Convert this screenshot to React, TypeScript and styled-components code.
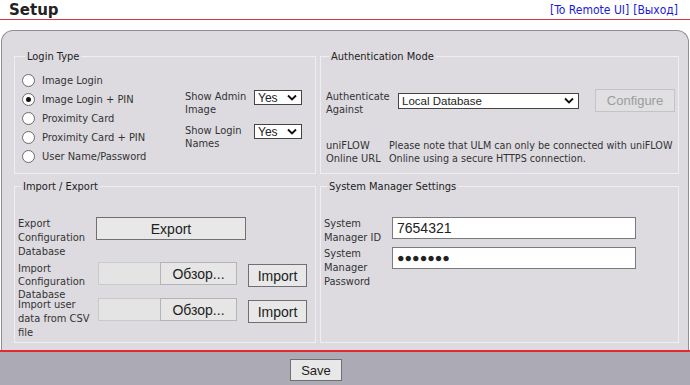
import React from 'react';
import styled, { createGlobalStyle } from 'styled-components';

const labelFont = `'DejaVu Sans Condensed', 'DejaVu Sans', sans-serif`;
const controlFont = `'Liberation Sans', Arial, sans-serif`;

const GlobalStyle = createGlobalStyle`
  html, body {
    margin: 0;
    background: #fff;
  }
  body {
    font-family: ${labelFont};
    color: #333;
  }
`;

const Page = styled.div`
  width: 690px;
  height: 385px;
  display: flex;
  flex-direction: column;
  overflow: hidden;
`;

const Header = styled.header`
  height: 19px;
  border-bottom: 1px solid #d9393b;
  display: flex;
  justify-content: space-between;
  align-items: flex-end;
  padding: 0 12px 0 9px;
`;

const Title = styled.h1`
  margin: 0;
  font: bold 15px/18px 'DejaVu Sans', sans-serif;
  color: #222;
`;

const Links = styled.nav`
  display: flex;
  gap: 4px;
  font-size: 12px;
  line-height: 18px;
`;

const Link = styled.a`
  color: #1a1ad8;
  text-decoration: none;
`;

const Panel = styled.main`
  margin: 10px 1px 0;
  flex: 1;
  background: #dddbe0;
  border: 1px solid #8f8d97;
  border-bottom: none;
  border-radius: 12px 12px 0 0;
  padding: 19px 9px 0 12px;
  display: grid;
  grid-template-columns: 302px 359px;
  grid-template-rows: 124px 163px;
  column-gap: 4px;
  row-gap: 6px;
`;

const Group = styled.fieldset<{ $pad: string }>`
  margin: 0;
  min-width: 0;
  padding: ${({ $pad }) => $pad};
  border: 1px solid #efeef2;
`;

const Legend = styled.legend`
  margin-left: 3px;
  padding: 0 2px;
  font-size: 11px;
  line-height: 13px;
  color: #222;
`;

const Label = styled.div<{ $w: number; $lh?: number; $top?: number }>`
  width: ${({ $w }) => $w}px;
  flex: none;
  margin-top: ${({ $top }) => $top ?? 0}px;
  font-size: 11px;
  line-height: ${({ $lh }) => $lh ?? 13}px;
  color: #333;
`;

/* Login type */
const LoginBody = styled.div`
  display: flex;
`;

const RadioList = styled.div`
  width: 163px;
  display: flex;
  flex-direction: column;
`;

const RadioRow = styled.label`
  height: 19px;
  display: flex;
  align-items: center;
  gap: 7px;
  font-size: 11px;
  color: #333;
`;

const RadioDot = styled.span<{ $checked?: boolean }>`
  width: 13px;
  height: 13px;
  box-sizing: border-box;
  border-radius: 50%;
  border: 1px solid #6a6a6a;
  background: #fff;
  display: grid;
  place-items: center;

  &::after {
    content: '';
    width: 5px;
    height: 5px;
    border-radius: 50%;
    background: ${({ $checked }) => ($checked ? '#111' : 'transparent')};
  }
`;

const Options = styled.div`
  margin-top: 19px;
  display: flex;
  flex-direction: column;
`;

const OptionRow = styled.div`
  height: 34px;
  display: flex;
  align-items: flex-start;
`;

const SelectBox = styled.div<{ $w: number; $h: number; $size: number }>`
  width: ${({ $w }) => $w}px;
  height: ${({ $h }) => $h}px;
  box-sizing: border-box;
  border: 1px solid #444;
  background: #fff;
  display: flex;
  align-items: center;
  justify-content: space-between;
  padding: 0 4px 0 3px;
  font: ${({ $size }) => $size}px ${controlFont};
  color: #222;
`;

const Chevron = () => (
  <svg width="10" height="7" viewBox="0 0 10 7">
    <polyline points="1,1.5 5,5.5 9,1.5" fill="none" stroke="#111" strokeWidth="1.9" />
  </svg>
);

/* Buttons */
const tones = {
  normal: { bg: '#e8e8e8', border: '#707070', color: '#222' },
  soft: { bg: '#e6e6e6', border: '#b4b4b4', color: '#222' },
  disabled: { bg: '#e0dfe2', border: '#c4c4c4', color: '#9c9c9c' },
};

const Button = styled.button<{ $w: number; $h: number; $size?: number; $tone?: keyof typeof tones }>`
  width: ${({ $w }) => $w}px;
  height: ${({ $h }) => $h}px;
  flex: none;
  box-sizing: border-box;
  padding: 0;
  border: 1px solid ${({ $tone = 'normal' }) => tones[$tone].border};
  background: ${({ $tone = 'normal' }) => tones[$tone].bg};
  color: ${({ $tone = 'normal' }) => tones[$tone].color};
  font: ${({ $size }) => $size ?? 14}px ${controlFont};
  border-radius: 0;
`;

const ConfigureButton = styled(Button)`
  margin-left: 16px;
`;

/* Authentication */
const AuthRow = styled.div`
  height: 23px;
  display: flex;
  align-items: center;
`;

const UrlRow = styled.div`
  margin-top: 27px;
  display: flex;
`;

const Note = styled.p`
  margin: 0;
  font-size: 10.7px;
  line-height: 13px;
  color: #333;
  white-space: nowrap;
`;

/* Import / export */
const FormRow = styled.div<{ $h?: number }>`
  height: ${({ $h }) => ($h ? `${$h}px` : 'auto')};
  display: flex;
  align-items: flex-start;
`;

const FilePicker = styled.div`
  margin-left: 2px;
  display: flex;
`;

const FileBox = styled.div`
  width: 62px;
  height: 23px;
  box-sizing: border-box;
  background: #e4e4e4;
  border: 1px solid #cacaca;
  border-right: none;
`;

const ImportButton = styled(Button)`
  margin: 2px 0 0 11px;
`;

/* System manager */
const TextInput = styled.input<{ $size?: number }>`
  width: 244px;
  height: 22px;
  box-sizing: border-box;
  border: 1px solid #7a7a7a;
  background: #fff;
  padding: 0 4px;
  font: ${({ $size }) => $size ?? 14}px ${controlFont};
  color: #222;
  outline: none;
`;

const Footer = styled.footer`
  height: 35px;
  box-sizing: border-box;
  border-top: 2px solid #e52a2f;
  background: #acaab4;
  padding: 7px 0 0 290px;
  display: flex;
  align-items: flex-start;
`;

const loginTypes = [
  'Image Login',
  'Image Login + PIN',
  'Proximity Card',
  'Proximity Card + PIN',
  'User Name/Password',
];

export default function App() {
  return (
    <Page>
      <GlobalStyle />
      <Header>
        <Title>Setup</Title>
        <Links>
          <Link href="#">[To Remote UI]</Link>
          <Link href="#">[Выход]</Link>
        </Links>
      </Header>

      <Panel>
        <Group $pad="8px 0 0 7px">
          <Legend>Login Type</Legend>
          <LoginBody>
            <RadioList>
              {loginTypes.map((t) => (
                <RadioRow key={t}>
                  <RadioDot $checked={t === 'Image Login + PIN'} />
                  {t}
                </RadioRow>
              ))}
            </RadioList>
            <Options>
              <OptionRow>
                <Label $w={69}>Show Admin Image</Label>
                <SelectBox $w={48} $h={15} $size={12}>
                  Yes
                  <Chevron />
                </SelectBox>
              </OptionRow>
              <OptionRow>
                <Label $w={69}>Show Login Names</Label>
                <SelectBox $w={48} $h={15} $size={12}>
                  Yes
                  <Chevron />
                </SelectBox>
              </OptionRow>
            </Options>
          </LoginBody>
        </Group>

        <Group $pad="26px 0 0 5px">
          <Legend>Authentication Mode</Legend>
          <AuthRow>
            <Label $w={72} $top={4}>
              Authenticate Against
            </Label>
            <SelectBox $w={181} $h={16} $size={11.5}>
              Local Database
              <Chevron />
            </SelectBox>
            <ConfigureButton $w={80} $h={23} $size={13} $tone="disabled" disabled>
              Configure
            </ConfigureButton>
          </AuthRow>
          <UrlRow>
            <Label $w={63}>uniFLOW Online URL</Label>
            <Note>
              Please note that ULM can only be connected with uniFLOW
              <br />
              Online using a secure HTTPS connection.
            </Note>
          </UrlRow>
        </Group>

        <Group $pad="24px 0 0 3px">
          <Legend>Import / Export</Legend>
          <FormRow $h={45}>
            <Label $w={78} $lh={14}>
              Export Configuration Database
            </Label>
            <Button $w={150} $h={23}>
              Export
            </Button>
          </FormRow>
          <FormRow $h={36}>
            <Label $w={78} $lh={13}>
              Import Configuration Database
            </Label>
            <FilePicker>
              <FileBox />
              <Button $w={77} $h={23} $tone="soft">
                Обзор...
              </Button>
            </FilePicker>
            <ImportButton $w={59} $h={23}>
              Import
            </ImportButton>
          </FormRow>
          <FormRow>
            <Label $w={78} $lh={14}>
              Import user data from CSV file
            </Label>
            <FilePicker>
              <FileBox />
              <Button $w={77} $h={23} $tone="soft">
                Обзор...
              </Button>
            </FilePicker>
            <ImportButton $w={59} $h={23}>
              Import
            </ImportButton>
          </FormRow>
        </Group>

        <Group $pad="24px 0 0 3px">
          <Legend>System Manager Settings</Legend>
          <FormRow $h={30}>
            <Label $w={68} $lh={14}>
              System Manager ID
            </Label>
            <TextInput readOnly value="7654321" />
          </FormRow>
          <FormRow>
            <Label $w={68} $lh={14}>
              System Manager Password
            </Label>
            <TextInput readOnly aria-label="System Manager Password" value="●●●●●●●" $size={12.5} />
          </FormRow>
        </Group>
      </Panel>

      <Footer>
        <Button $w={52} $h={22} $size={13}>
          Save
        </Button>
      </Footer>
    </Page>
  );
}
